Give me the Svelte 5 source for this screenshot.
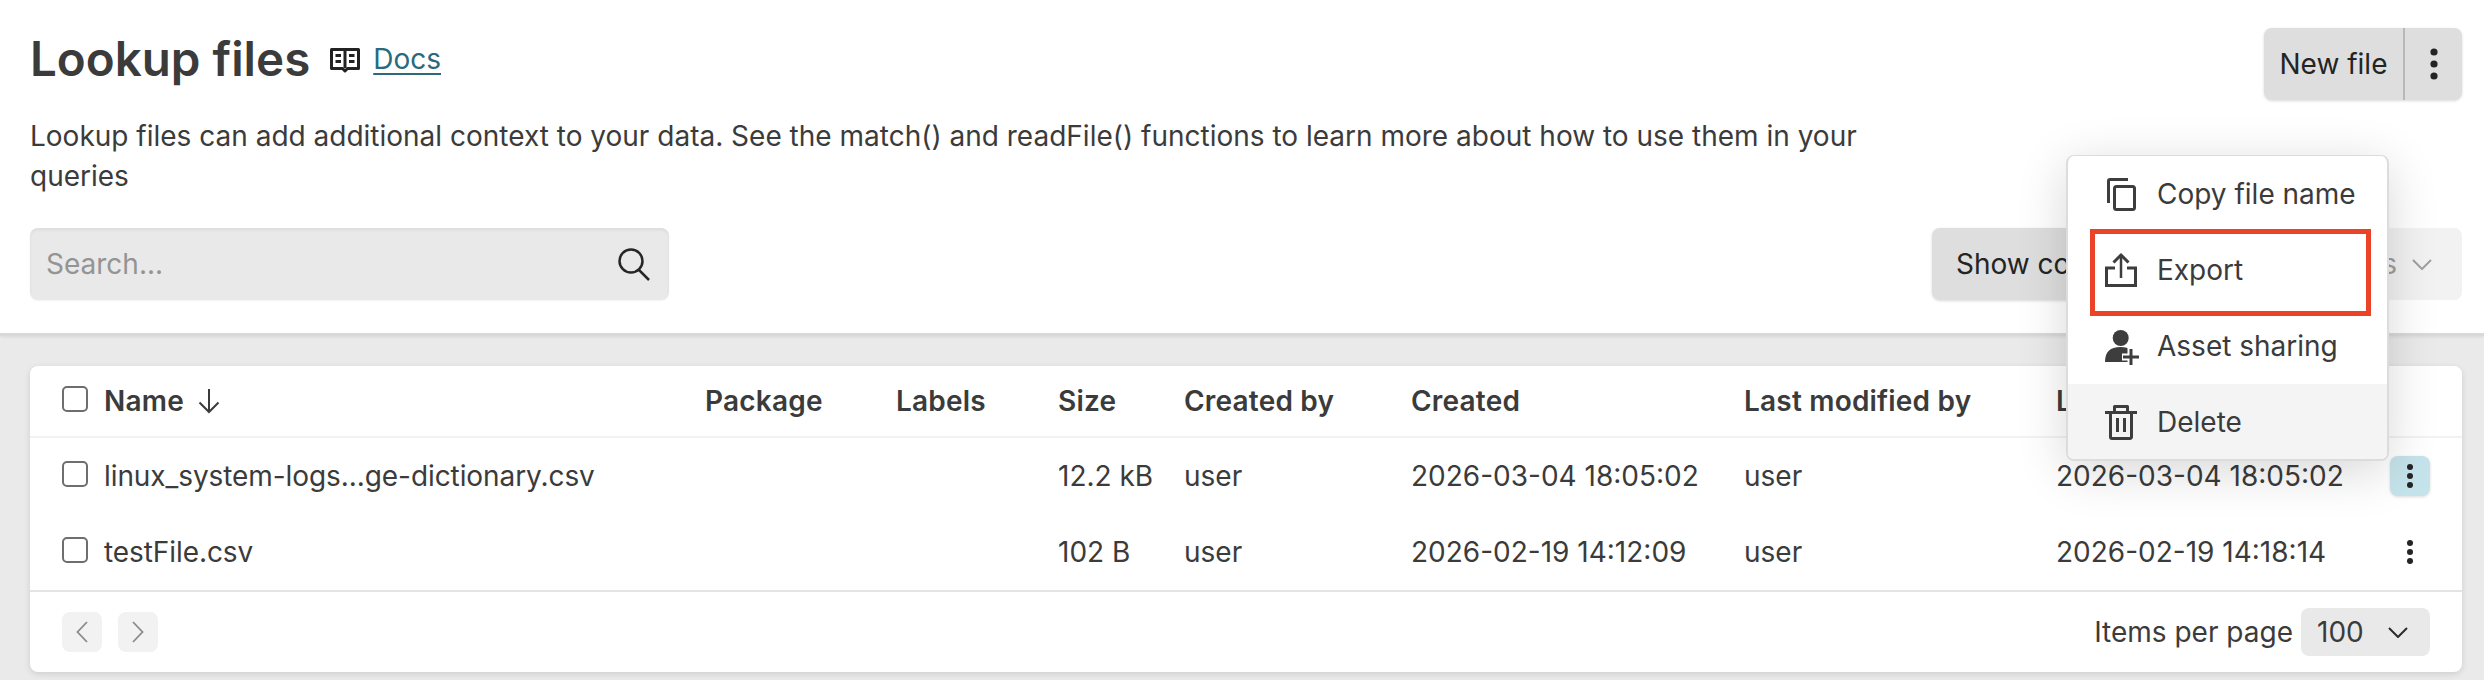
<script>
  const columns = ['Package', 'Labels', 'Size', 'Created by', 'Created', 'Last modified by', 'Last modified'];
  const files = [
    { name: 'linux_system-logs...ge-dictionary.csv', size: '12.2 kB', by: 'user', created: '2026-03-04 18:05:02', modifiedBy: 'user', modified: '2026-03-04 18:05:02', open: true },
    { name: 'testFile.csv', size: '102 B', by: 'user', created: '2026-02-19 14:12:09', modifiedBy: 'user', modified: '2026-02-19 14:18:14', open: false }
  ];
</script>

{#snippet kebab(step, r)}
  <svg width="10" height={step * 2 + 10} viewBox="0 0 10 {step * 2 + 10}" fill="currentColor">
    <circle cx="5" cy="5" {r} /><circle cx="5" cy={5 + step} {r} /><circle cx="5" cy={5 + step * 2} {r} />
  </svg>
{/snippet}

{#snippet chevron(cls)}
  <svg class={cls} width="20" height="11" viewBox="0 0 20 11" fill="none" stroke="currentColor" stroke-width="2"><path d="M1 1l9 9 9-9" /></svg>
{/snippet}

<div class="page">
  <header class="top">
    <div class="title-row">
      <div class="title-left">
        <h1>Lookup files</h1>
        <svg class="book" width="30" height="25" viewBox="0 0 30 25" fill="none" stroke="#222" stroke-width="3" stroke-linejoin="round">
          <path d="M1.500 1.500h27v19H17.500L15 23l-2.500-2.500h-11z" />
          <path d="M15 2v18" />
          <path d="M5.500 7.500h5.500M5.500 13.500h5.500M19 7.500h5.500M19 13.500h5.500" />
        </svg>
        <a href="#docs" class="docs">Docs</a>
      </div>
      <div class="split">
        <button class="split-main">New file</button>
        <button class="split-more">{@render kebab(12, 3.6)}</button>
      </div>
    </div>
    <p class="lead">Lookup files can add additional context to your data. See the match() and readFile() functions to learn more about how to use them in your queries</p>
    <div class="tools">
      <div class="search">
        <span>Search...</span>
        <svg width="36" height="36" viewBox="0 0 36 36" fill="none" stroke="#262626" stroke-width="2.500"><circle cx="15" cy="15" r="11.500" /><path d="M23 24l10 10" /></svg>
      </div>
      <div class="tool-right">
        <button class="show">Show columns</button>
        <button class="filter">Packages {@render chevron('chev-soft')}</button>
      </div>
    </div>
  </header>

  <main class="body">
    <section class="card">
      <table>
        <thead>
          <tr>
            <th class="name-col"><span class="name-cell"><span class="check"></span>Name
              <svg class="arrow" width="22" height="26" viewBox="0 0 22 26" fill="none" stroke="#3b3b3b" stroke-width="2"><path d="M11 1v23M1.500 14.500L11 24l9.500-9.500" /></svg></span></th>
            {#each columns as col}
              <th>{col}</th>
            {/each}
            <th class="act"></th>
          </tr>
        </thead>
        <tbody>
          {#each files as f}
            <tr>
              <td><span class="name-cell file-name"><span class="check"></span>{f.name}</span></td>
              <td></td>
              <td></td>
              <td>{f.size}</td>
              <td>{f.by}</td>
              <td>{f.created}</td>
              <td>{f.modifiedBy}</td>
              <td>{f.modified}</td>
              <td class="act"><button class="row-menu" class:open={f.open}>{@render kebab(9, 3)}</button></td>
            </tr>
          {/each}
        </tbody>
      </table>
      <footer class="foot">
        <div class="pager">
          <button aria-label="Previous page"><svg width="12" height="22" viewBox="0 0 12 22" fill="none" stroke="currentColor" stroke-width="1.800"><path d="M11 1L1.500 11 11 21" /></svg></button>
          <button aria-label="Next page"><svg width="12" height="22" viewBox="0 0 12 22" fill="none" stroke="currentColor" stroke-width="1.800"><path d="M1 1l9.500 10L1 21" /></svg></button>
        </div>
        <div class="per-page">
          <span>Items per page</span>
          <div class="select">100 {@render chevron('chev')}</div>
        </div>
      </footer>
    </section>
  </main>

  <div class="menu">
    <div class="item">
      <svg width="34" height="36" viewBox="0 0 34 36" fill="none" stroke="#3d3d3d" stroke-width="3"><path d="M3.500 27V5A1.500 1.500 0 0 1 5 3.500h18" /><rect x="9.500" y="10.500" width="20" height="23" rx="2" /></svg>
      Copy file name
    </div>
    <div class="item">
      <svg width="34" height="36" viewBox="0 0 34 36" fill="none" stroke="#3d3d3d" stroke-width="3"><path d="M10 16H1.500v17.500h29V16H22" /><path d="M16 26V4" stroke-width="2.500" /><path d="M8.500 10.500L16 3l7.500 7.500" /></svg>
      Export
    </div>
    <div class="item">
      <svg width="34" height="36" viewBox="0 0 34 36" fill="#3d3d3d"><circle cx="15.700" cy="10" r="8" /><path d="M0 34c0-10 5-15 15.500-15 5 0 8 1 10 3v12z" /><path d="M26 20v18M17 29h17" fill="none" stroke="#fff" stroke-width="7" /><path d="M26 21v16M18 29h16" fill="none" stroke="#3d3d3d" stroke-width="3" /></svg>
      Asset sharing
    </div>
    <div class="item danger">
      <svg width="34" height="36" viewBox="0 0 34 36" fill="none" stroke="#3d3d3d" stroke-width="3" stroke-linejoin="round"><path d="M0 8.500h32M9.500 8V2.500h13V8M5.500 8.500V33a1.500 1.500 0 0 0 1.500 1.500h18a1.500 1.500 0 0 0 1.500-1.500V8.500M12.500 14v14M19.500 14v14" /></svg>
      Delete
    </div>
  </div>
  <div class="highlight"></div>
</div>

<style>
  :global(body) {
    margin: 0;
    background: #eaeaea;
  }

  .page {
    position: relative;
    width: 2484px;
    height: 680px;
    overflow: hidden;
    font-family: Inter, "Noto Sans", sans-serif;
    font-size: 28px;
    color: #3b3b3b;
  }

  button {
    font: inherit;
    border: none;
    cursor: pointer;
  }

  .top {
    box-sizing: border-box;
    height: 336px;
    padding: 28px 22px 0 30px;
    background: #fff;
    border-bottom: 3px solid #d9d9d9;
    box-shadow: 0 1px 3px rgba(0, 0, 0, 0.08);
  }

  .title-row {
    display: flex;
    align-items: flex-start;
    justify-content: space-between;
    height: 72px;
  }

  .title-left {
    display: flex;
    align-items: center;
    height: 62px;
  }

  h1 {
    margin: 0 20px 0 0;
    font-size: 47.500px;
    font-weight: 600;
    line-height: 62px;
  }

  .book {
    margin: 2px 13px 0 0;
  }

  .docs {
    color: #2a6a7c;
    text-decoration: underline;
    text-underline-offset: 4px;
  }

  .split {
    display: flex;
    height: 72px;
    border-radius: 8px;
    overflow: hidden;
    background: #dedede;
    box-shadow: 0 1px 3px rgba(0, 0, 0, 0.15);
  }

  .split button {
    background: none;
    color: #242424;
  }

  .split-main {
    width: 141px;
    border-right: 2px solid #b8b8b8;
  }

  .split-more {
    width: 57px;
    display: flex;
    align-items: center;
    justify-content: center;
  }

  .lead {
    width: 1850px;
    margin: 16px 0 0;
    line-height: 40px;
    color: #3b3b3b;
  }

  .tools {
    display: flex;
    justify-content: space-between;
    margin-top: 32px;
  }

  .search {
    box-sizing: border-box;
    width: 639px;
    height: 72px;
    padding: 0 17px 0 16px;
    display: flex;
    align-items: center;
    justify-content: space-between;
    border-radius: 8px;
    background: #e9e9e9;
    color: #949494;
    box-shadow: inset 0 2px 3px rgba(0, 0, 0, 0.06), 0 1px 2px rgba(0, 0, 0, 0.05);
  }

  .tool-right {
    display: flex;
    height: 72px;
  }

  .show {
    width: 300px;
    padding: 0 0 0 24px;
    text-align: left;
    background: #dedede;
    color: #242424;
    border-radius: 8px 0 0 8px;
    box-shadow: 0 1px 3px rgba(0, 0, 0, 0.15);
  }

  .filter {
    width: 230px;
    padding: 0 30px 0 0;
    display: flex;
    align-items: center;
    justify-content: flex-end;
    gap: 15px;
    background: #f2f2f2;
    color: #9c9c9c;
    border-radius: 0 8px 8px 0;
    white-space: nowrap;
  }

  .filter svg {
    flex: none;
  }

  .body {
    padding: 30px 22px 0 30px;
  }

  .card {
    height: 306px;
    background: #fff;
    border-radius: 8px;
    box-shadow: 0 2px 6px rgba(0, 0, 0, 0.12);
    overflow: hidden;
  }

  table {
    width: 2432px;
    table-layout: fixed;
    border-collapse: collapse;
  }

  th {
    height: 70px;
    padding: 0;
    text-align: left;
    font-weight: 600;
    letter-spacing: 0.2px;
    border-bottom: 2px solid #f2f2f2;
  }

  td {
    height: 76px;
    padding: 0;
    white-space: nowrap;
  }

  th:nth-child(1), td:nth-child(1) { width: 675px; padding-left: 32px; box-sizing: border-box; }
  th:nth-child(2), td:nth-child(2) { width: 191px; }
  th:nth-child(3), td:nth-child(3) { width: 162px; }
  th:nth-child(4), td:nth-child(4) { width: 126px; }
  th:nth-child(5), td:nth-child(5) { width: 227px; }
  th:nth-child(6), td:nth-child(6) { width: 333px; }
  th:nth-child(7), td:nth-child(7) { width: 312px; }
  th:nth-child(8), td:nth-child(8) { width: 334px; }

  .name-cell {
    display: flex;
    align-items: center;
    gap: 16px;
  }

  .file-name {
    letter-spacing: -0.08px;
  }

  .check {
    box-sizing: border-box;
    width: 26px;
    height: 26px;
    border: 2px solid #6e6e6e;
    border-radius: 5px;
    margin-top: -4px;
  }

  .arrow {
    margin-left: -2px;
  }

  .act {
    text-align: left;
  }

  .row-menu {
    width: 40px;
    height: 40px;
    display: flex;
    align-items: center;
    justify-content: center;
    border-radius: 8px;
    background: none;
    color: #242424;
  }

  .row-menu.open {
    background: #c5e3ea;
    box-shadow: 0 1px 3px rgba(0, 0, 0, 0.15);
  }

  .foot {
    box-sizing: border-box;
    display: flex;
    align-items: center;
    justify-content: space-between;
    height: 82px;
    padding: 0 32px;
    border-top: 2px solid #e4e4e4;
  }

  .pager {
    display: flex;
    gap: 16px;
  }

  .pager button {
    width: 40px;
    height: 40px;
    display: flex;
    align-items: center;
    justify-content: center;
    border-radius: 8px;
    background: #f2f2f2;
    color: #8a8a8a;
  }

  .per-page {
    display: flex;
    align-items: center;
    gap: 8px;
  }

  .select {
    box-sizing: border-box;
    width: 129px;
    height: 48px;
    padding: 0 22px 0 16px;
    display: flex;
    align-items: center;
    justify-content: space-between;
    border-radius: 8px;
    background: #e9e9e9;
    color: #3b3b3b;
  }

  .chev {
    color: #2b2b2b;
  }

  .chev-soft {
    color: #a0a0a0;
  }

  .menu {
    position: absolute;
    left: 2066px;
    top: 155px;
    box-sizing: border-box;
    width: 323px;
    height: 306px;
    background: #fff;
    border: 2px solid #dcdcdc;
    border-top-width: 1px;
    border-radius: 8px;
    overflow: hidden;
    box-shadow: 0 10px 50px rgba(0, 0, 0, 0.16);
  }

  .item {
    display: flex;
    align-items: center;
    gap: 18px;
    height: 76px;
    padding-left: 37px;
  }

  .item svg {
    flex: none;
    overflow: visible;
  }

  .danger {
    background: #f4f4f4;
  }

  .highlight {
    position: absolute;
    left: 2090px;
    top: 229px;
    box-sizing: border-box;
    width: 281px;
    height: 87px;
    border: 5px solid #ea4327;
  }
</style>
